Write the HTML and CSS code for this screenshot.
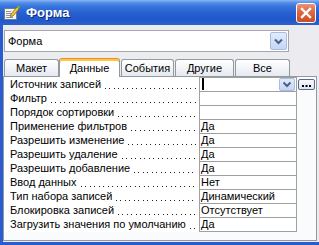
FILE: index.html
```html
<html>
<head>
  <link rel="stylesheet" href="styles.css">
</head>

<body>
  <div class="window">
    <div class="titlebar">
      <svg class="title-icon" width="16" height="16" viewBox="0 0 16 16">
        <rect x="0.5" y="3.5" width="12" height="11" fill="#f4f5f7" stroke="#6d7c8e"/>
        <rect x="2" y="6" width="5" height="1" fill="#8a96a6"/>
        <rect x="2" y="8" width="7" height="1" fill="#8a96a6"/>
        <rect x="2" y="10" width="7" height="1" fill="#8a96a6"/>
        <rect x="2" y="12" width="7" height="1" fill="#8a96a6"/>
        <polygon points="7,9 13,2 15,4 9,11 6.5,11.5" fill="#f3c53a" stroke="#8a6410" stroke-width="0.8"/>
        <polygon points="13,2 14.5,0.5 16,2 15,4" fill="#6cbf3a"/>
      </svg>
      <span class="title-text">Форма</span>
      <div class="close-btn">
        <svg width="18" height="18" viewBox="0 0 18 18">
          <path d="M5 5 L13 13 M13 5 L5 13" stroke="#fff" stroke-width="2.4" stroke-linecap="square"/>
        </svg>
      </div>
    </div>

    <div class="frame">
      <div class="combo">
        <span class="combo-text">Форма</span>
        <span class="combo-btn">
          <svg width="15" height="16" viewBox="0 0 15 16">
            <path d="M4 6.5 L7.5 10 L11 6.5" fill="none" stroke="#4d6185" stroke-width="2"/>
          </svg>
        </span>
      </div>

      <div class="tabs">
        <div class="tab tab-layout">Макет</div>
        <div class="tab tab-data selected">Данные</div>
        <div class="tab tab-events">События</div>
        <div class="tab tab-other">Другие</div>
        <div class="tab tab-all">Все</div>
      </div>

      <div class="panel">
        <div class="props">
          <div class="prop">
            <span class="prop-label"><span>Источник записей</span><span class="leader"></span></span>
            <span class="prop-value">
              <span class="caret"></span>
              <span class="cell-btn">
                <svg width="14" height="11" viewBox="0 0 14 11">
                  <path d="M3.5 3.5 L7 7 L10.5 3.5" fill="none" stroke="#4d6185" stroke-width="2"/>
                </svg>
              </span>
            </span>
            <span class="build-btn">
              <svg width="15" height="9" viewBox="0 0 15 9">
                <rect x="3" y="5" width="2" height="2" fill="#000"/>
                <rect x="6.5" y="5" width="2" height="2" fill="#000"/>
                <rect x="10" y="5" width="2" height="2" fill="#000"/>
              </svg>
            </span>
          </div>
          <div class="prop">
            <span class="prop-label"><span>Фильтр</span><span class="leader"></span></span>
            <span class="prop-value"></span>
          </div>
          <div class="prop">
            <span class="prop-label"><span>Порядок сортировки</span><span class="leader"></span></span>
            <span class="prop-value"></span>
          </div>
          <div class="prop">
            <span class="prop-label"><span>Применение фильтров</span><span class="leader"></span></span>
            <span class="prop-value">Да</span>
          </div>
          <div class="prop">
            <span class="prop-label"><span>Разрешить изменение</span><span class="leader"></span></span>
            <span class="prop-value">Да</span>
          </div>
          <div class="prop">
            <span class="prop-label"><span>Разрешить удаление</span><span class="leader"></span></span>
            <span class="prop-value">Да</span>
          </div>
          <div class="prop">
            <span class="prop-label"><span>Разрешить добавление</span><span class="leader"></span></span>
            <span class="prop-value">Да</span>
          </div>
          <div class="prop">
            <span class="prop-label"><span>Ввод данных</span><span class="leader"></span></span>
            <span class="prop-value">Нет</span>
          </div>
          <div class="prop">
            <span class="prop-label"><span>Тип набора записей</span><span class="leader"></span></span>
            <span class="prop-value">Динамический</span>
          </div>
          <div class="prop">
            <span class="prop-label"><span>Блокировка записей</span><span class="leader"></span></span>
            <span class="prop-value">Отсутствует</span>
          </div>
          <div class="prop last">
            <span class="prop-label"><span>Загрузить значения по умолчанию</span><span class="leader"></span></span>
            <span class="prop-value">Да</span>
          </div>
        </div>
      </div>
    </div>
  </div>
</body>
</html>
```

FILE: styles.css
```css
body
{
  margin: 0;
  font-family: "Liberation Sans", Arial, sans-serif;
  font-size: 11px;
  color: #000;
  background: #ecebef;
}

.window
{
  width: 319px;
  height: 245px;
  display: flex;
  flex-direction: column;
  overflow: hidden;
}

/* title bar */
.titlebar
{
  height: 25px;
  flex: none;
  display: flex;
  align-items: center;
  background: linear-gradient(to bottom, #8bb6f2 0, #4f8be8 3px, #3472dc 7px, #2760d0 13px, #2157c8 20px, #2b62cf 25px);
}

.title-icon
{
  margin-left: 4px;
  margin-top: 1px;
}

.title-text
{
  margin-left: 6px;
  color: #fff;
  font-weight: bold;
  font-size: 13px;
  text-shadow: 1px 1px 0 #0b2a80;
}

.close-btn
{
  margin-left: auto;
  margin-right: 3px;
  margin-top: 1px;
  width: 18px;
  height: 18px;
  border: 1px solid #fff;
  border-radius: 3px;
  background: linear-gradient(to bottom, #ea9478 0, #dd6a45 40%, #cd4c24 100%);
  display: flex;
}

/* window body */
.frame
{
  flex: 1;
  display: flex;
  flex-direction: column;
  border-left: 3px solid #2a5bd0;
  border-bottom: 3px solid #2a5bd0;
  padding-bottom: 1px;
  background: #ecebef;
}

.combo
{
  margin: 5px 0 5px 1px;
  width: 283px;
  height: 20px;
  border: 1px solid #a2a6ae;
  background: #fff;
  display: flex;
  align-items: center;
}

.combo-text
{
  padding-left: 3px;
}

.combo-btn
{
  margin-left: auto;
  margin-right: 1px;
  width: 15px;
  height: 16px;
  border: 1px solid #a9bde0;
  border-radius: 2px;
  background: linear-gradient(to bottom, #e2ebfc, #c5d6f6);
  display: flex;
}

/* tabs */
.tabs
{
  height: 19px;
  flex: none;
  display: flex;
  align-items: flex-end;
  padding-left: 1px;
  position: relative;
  z-index: 1;
}

.tab
{
  height: 16px;
  border: 1px solid #919b9c;
  border-bottom: none;
  border-radius: 3px 3px 0 0;
  background: linear-gradient(to bottom, #ffffff, #e6e9f1);
  text-align: center;
  line-height: 17px;
  box-sizing: content-box;
}

.tab-layout { width: 53px; }
.tab-data { width: 59px; }
.tab-events { width: 51px; margin-left: 1px; }
.tab-other { width: 57px; margin-left: 1px; }
.tab-all { width: 53px; margin-left: 1px; }

.tab.selected
{
  height: 17px;
  margin-bottom: -1px;
  border-top: 1px solid #e68b2c;
  box-shadow: inset 0 2px 0 #ffc73c;
  background: #fff;
  line-height: 19px;
  padding-bottom: 1px;
}

/* property page */
.panel
{
  width: 312px;
  height: 163px;
  border: 1px solid #919b9c;
  background: #fafbfd;
}

.props
{
  display: flex;
  flex-direction: column;
}

.prop
{
  height: 14px;
  display: flex;
}

.prop.last
{
  height: 15px;
}

.prop-label
{
  width: 195px;
  flex: none;
  display: flex;
  padding-left: 6px;
  box-sizing: border-box;
  background: #fff;
  line-height: 13px;
  padding-top: 1px;
  white-space: nowrap;
}

.leader
{
  flex: 1;
  margin-left: 4px;
  margin-right: 2px;
  margin-top: -1px;
  background:
    linear-gradient(to right, #222 1px, transparent 1px, transparent 4px, #222 4px, #222 5px, transparent 5px)
    0 11px / 9px 1px repeat-x;
}

.prop-value
{
  width: 95px;
  flex: none;
  display: flex;
  border: 1px solid #a0a0a0;
  border-bottom: none;
  background: #fff;
  padding-left: 1px;
  line-height: 13px;
  white-space: nowrap;
}

.prop.last .prop-value
{
  border-bottom: 1px solid #a0a0a0;
}

.caret
{
  width: 2px;
  height: 12px;
  margin-left: 1px;
  background: #000;
}

.cell-btn
{
  margin-left: auto;
  margin-right: 1px;
  width: 14px;
  height: 11px;
  border: 1px solid #a9bde0;
  border-radius: 2px;
  background: linear-gradient(to bottom, #e2ebfc, #c5d6f6);
  display: flex;
}

.build-btn
{
  margin-left: 1px;
  margin-top: 2px;
  width: 15px;
  height: 9px;
  border: 1px solid #5a6b8c;
  border-radius: 2px;
  background: linear-gradient(to bottom, #f8f9fc, #dfe5f0);
  display: flex;
}
```
